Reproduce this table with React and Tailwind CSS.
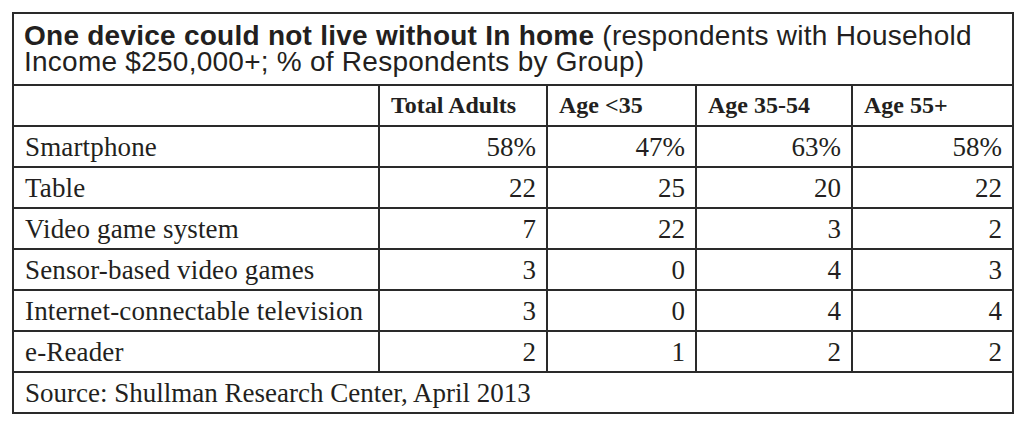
import React from 'react';

const rows = [
  { label: 'Smartphone', values: ['58%', '47%', '63%', '58%'] },
  { label: 'Table', values: ['22', '25', '20', '22'] },
  { label: 'Video game system', values: ['7', '22', '3', '2'] },
  { label: 'Sensor-based video games', values: ['3', '0', '4', '3'] },
  { label: 'Internet-connectable television', values: ['3', '0', '4', '4'] },
  { label: 'e-Reader', values: ['2', '1', '2', '2'] },
];

const headers = ['Total Adults', 'Age <35', 'Age 35-54', 'Age 55+'];

const serif = "font-['Liberation_Serif','Times_New_Roman',serif]";
const gridCols = 'grid grid-cols-[364px_168px_149px_156px_161px]';

const App = () => {
  return (
    <div className="w-[1024px] h-[426px] bg-white pt-[12px] pl-[12px]">
      <div className="w-[1002px] border-2 border-[#2a2a2a] text-[#231f20]">
        {/* title */}
        <div className="h-[70px] pl-[10px] pt-[9px] font-['Liberation_Sans',Arial,sans-serif] text-[28px] leading-[26px] tracking-[0.25px] whitespace-nowrap">
          <span className="font-bold">One device could not live without In home</span>{' '}
          (respondents with Household
          <br />
          Income $250,000+; % of Respondents by Group)
        </div>

        {/* column headers */}
        <div className={`${gridCols} border-t-2 border-[#2a2a2a] h-[41px] ${serif}`}>
          <div />
          {headers.map((h) => (
            <div
              key={h}
              className="border-l-2 border-[#2a2a2a] pl-[11px] text-[24px] leading-[39px] font-bold"
            >
              {h}
            </div>
          ))}
        </div>

        {rows.map((row) => (
          <div key={row.label} className={`${gridCols} border-t-2 border-[#2a2a2a] h-[41px] ${serif} text-[27px] leading-[40px]`}>
            <div className="pl-[11px] whitespace-nowrap tracking-[0.15px]">{row.label}</div>
            {row.values.map((v, i) => (
              <div key={i} className="border-l-2 border-[#2a2a2a] pr-[10px] text-right">
                {v}
              </div>
            ))}
          </div>
        ))}

        {/* source */}
        <div className={`border-t-2 border-[#2a2a2a] h-[41px] pl-[11px] ${serif} text-[27px] leading-[40px]`}>
          Source: Shullman Research Center, April 2013
        </div>
      </div>
    </div>
  );
};

export default App;
